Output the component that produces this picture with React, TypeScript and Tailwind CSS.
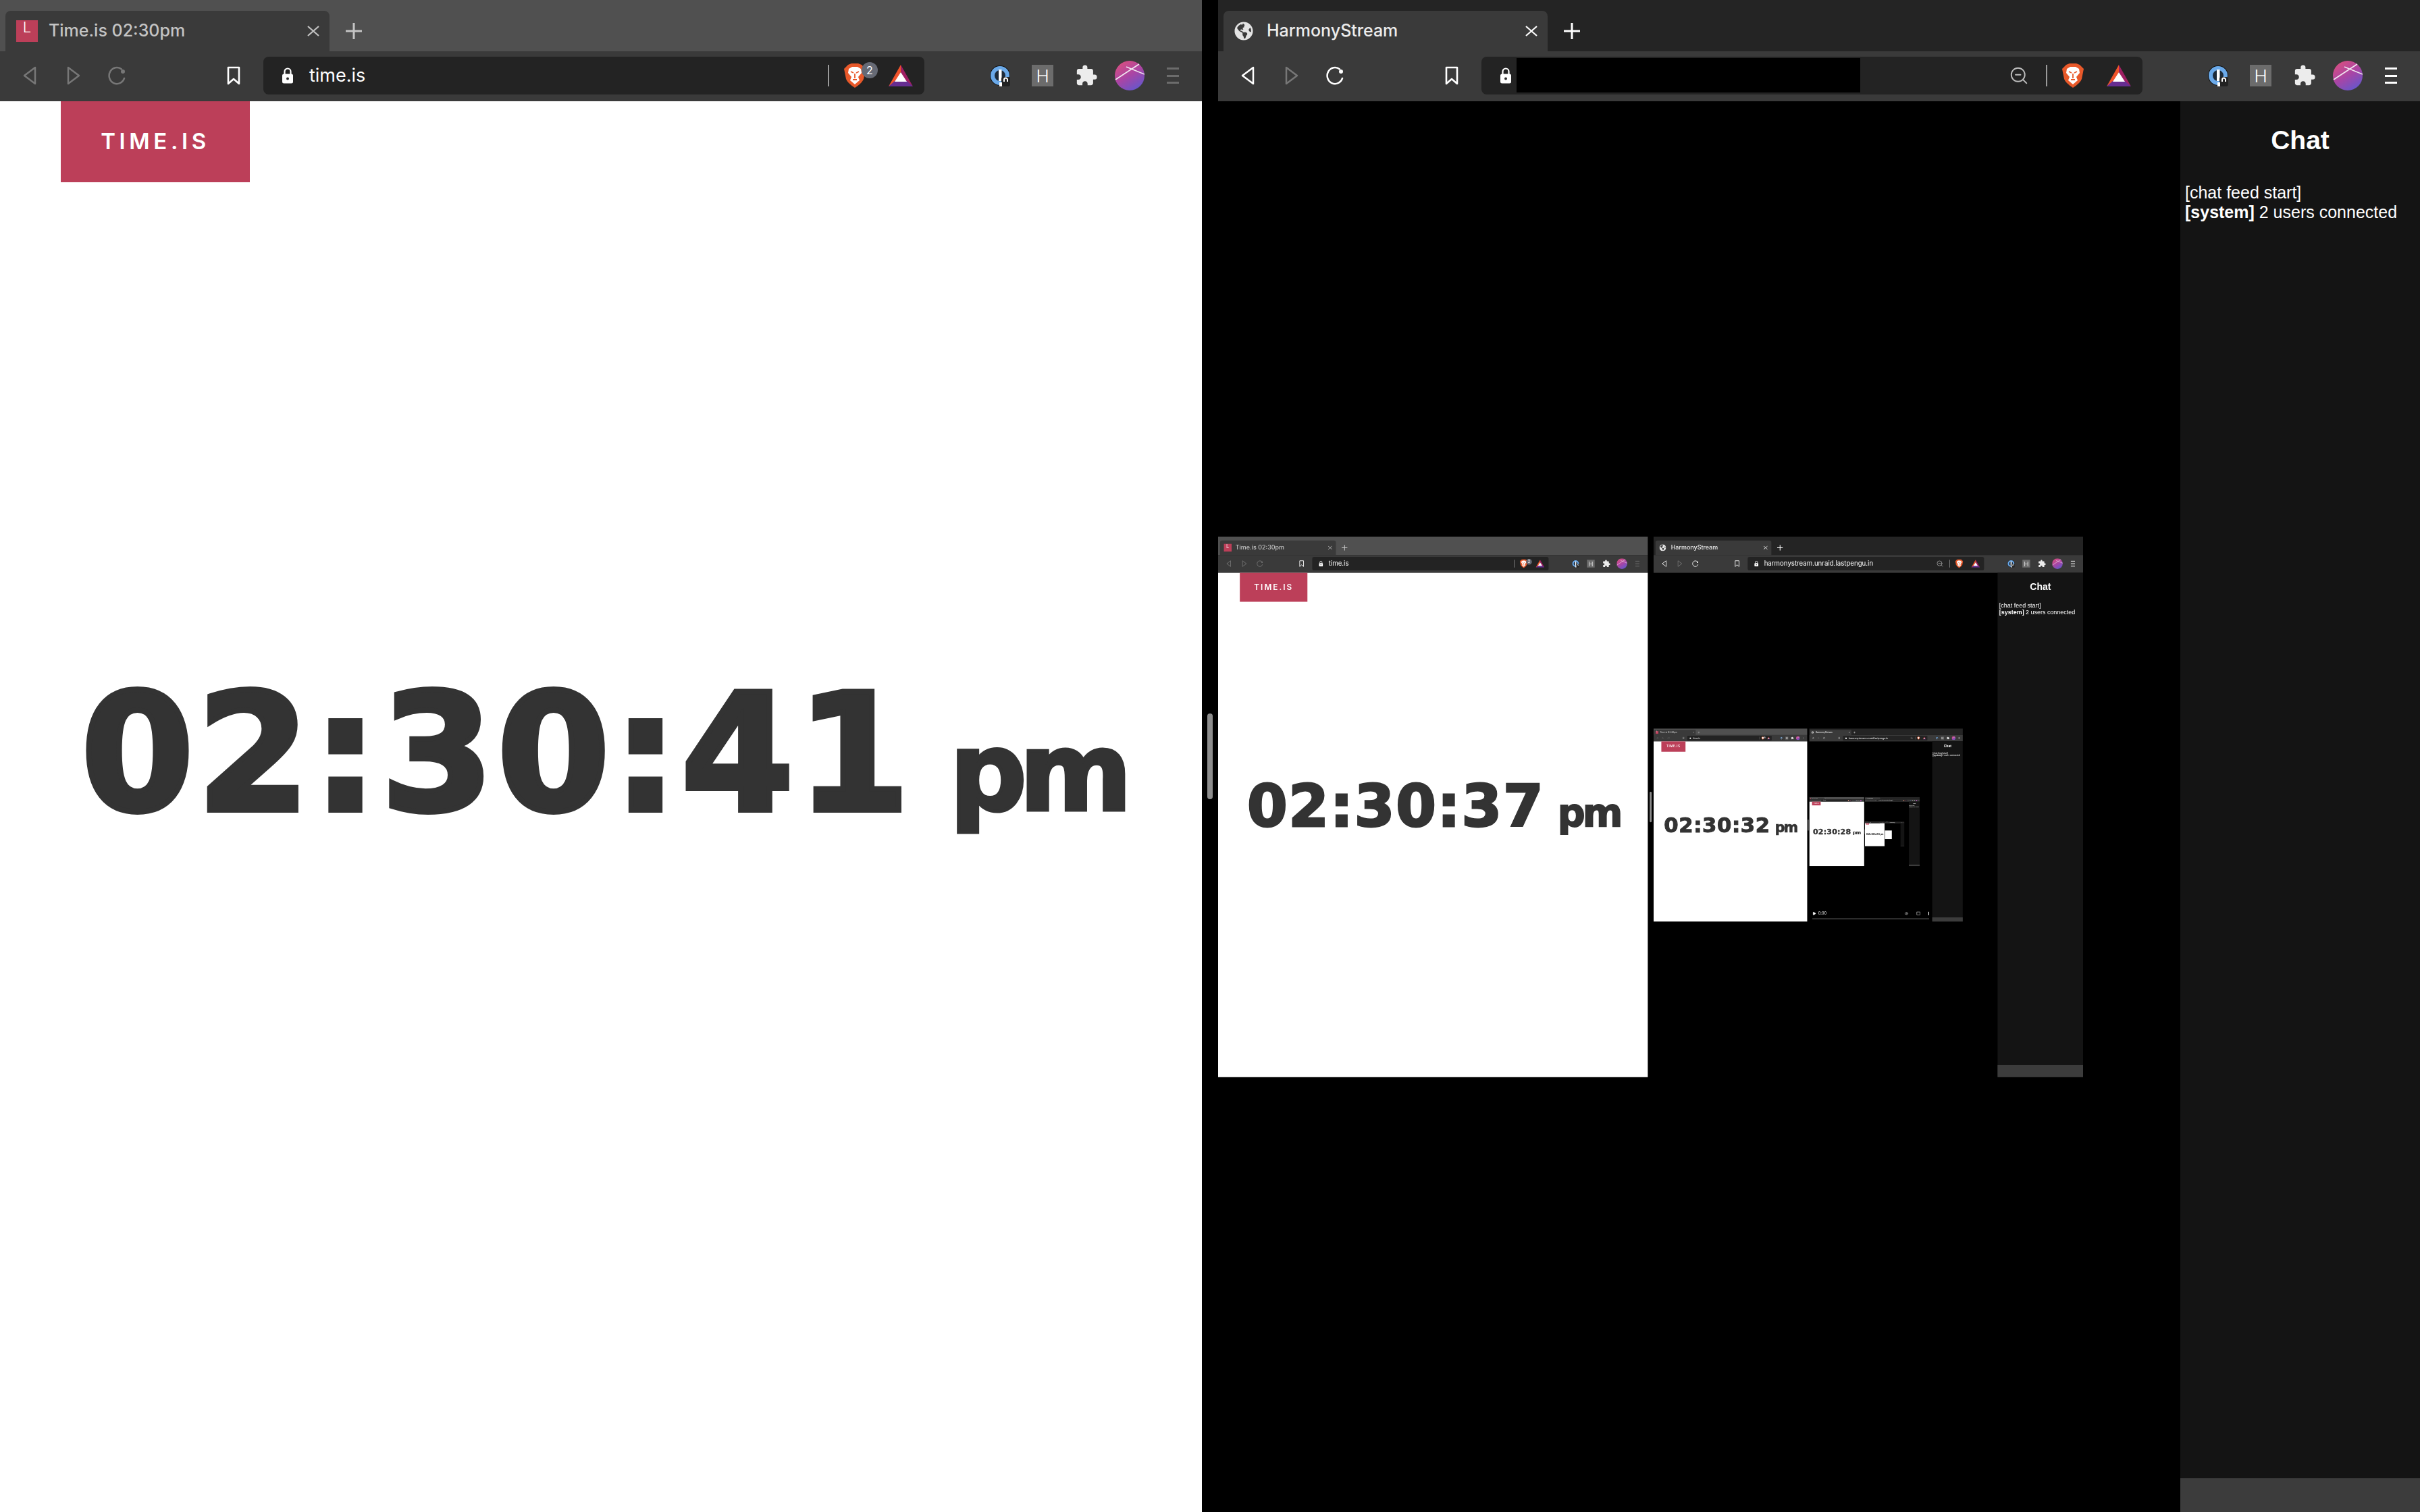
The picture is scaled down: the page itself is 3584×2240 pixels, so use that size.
import { FaGlobeAmericas } from 'react-icons/fa';
import { MdExtension } from 'react-icons/md';
import { Play, Volume2, ZoomOut } from 'lucide-react';

const clockTimes = ['02:30:41', '02:30:37', '02:30:32', '02:30:28', '02:30:23'];
const MAX_DEPTH = 5;

// softer picture the deeper we are in the capture loop
const thumbBlur = ['', 'blur-[0.7px]', 'blur-[1.5px]', 'blur-[4px]', 'blur-[10px]', 'blur-[20px]'];

function BackIcon({ color }: { color: string }) {
  return (
    <svg width="20" height="28" viewBox="0 0 20 28" fill="none" stroke={color} strokeWidth="2.5" strokeLinejoin="round">
      <path d="M18 2 L2 14 L18 26 Z" />
    </svg>
  );
}

function ForwardIcon({ color }: { color: string }) {
  return (
    <svg width="20" height="28" viewBox="0 0 20 28" fill="none" stroke={color} strokeWidth="2.5" strokeLinejoin="round">
      <path d="M2 2 L18 14 L2 26 Z" />
    </svg>
  );
}

function ReloadIcon({ color }: { color: string }) {
  return (
    <svg width="28" height="28" viewBox="0 0 28 28" fill="none" stroke={color} strokeWidth="2.5" strokeLinecap="round">
      <path d="M21 4.5 A 11.5 12 0 1 0 25 18" />
      <circle cx="23" cy="8" r="3" fill={color} stroke="none" />
    </svg>
  );
}

function BookmarkIcon() {
  return (
    <svg width="20" height="28" viewBox="0 0 20 28" fill="none" stroke="#fff" strokeWidth="2.6" strokeLinejoin="round">
      <path d="M2 2 H18 V26 L10 19 L2 26 Z" />
    </svg>
  );
}

function LockIcon() {
  return (
    <svg width="18" height="24" viewBox="0 0 18 24" fill="none">
      <path d="M4.5 10 V6 a4.5 4.5 0 0 1 9 0 V10" stroke="#fff" strokeWidth="2.2" />
      <rect x="1" y="9.5" width="16" height="14" rx="2.5" fill="#fff" />
      <circle cx="9" cy="16.5" r="2" fill="#2a2a2a" />
    </svg>
  );
}

function BraveIcon() {
  return (
    <svg width="34" height="36" viewBox="0 0 34 36">
      <path d="M7 2 L12 0 H22 L27 2 L33 8 L30 23 Q28 29 17 36 Q6 29 4 23 L1 8 Z" fill="#e8592a" />
      <path d="M8 8 L13 5 H21 L26 8 L27 14 L22 20 L24 25 L17 31 L10 25 L12 20 L7 14 Z" fill="#fff" />
      <path d="M11 12 L15 14 M23 12 L19 14 M17 15 V22 M14 24 H20" stroke="#e8592a" strokeWidth="1.8" fill="none" />
    </svg>
  );
}

function BatIcon() {
  return (
    <svg width="36" height="32" viewBox="0 0 36 32">
      <path d="M18 0 L36 32 L26 26 L18 11 Z" fill="#9e1f63" />
      <path d="M18 0 L0 32 L10 26 L18 11 Z" fill="#f0532b" />
      <path d="M0 32 H36 L27 24 H9 Z" fill="#662d91" />
      <path d="M18 11 L27 25 H9 Z" fill="#fff" />
    </svg>
  );
}

function OnePasswordIcon() {
  return (
    <svg width="30" height="32" viewBox="0 0 30 32">
      <circle cx="15" cy="16" r="15" fill="#111" />
      <circle cx="15" cy="16" r="11" fill="#1d2b3a" stroke="#6aa9e9" strokeWidth="6" />
      <rect x="13" y="7" width="4.5" height="17" fill="#fff" />
      <rect x="17" y="18" width="13" height="14" rx="3" fill="#222" />
      <path d="M21 25 v-3 a2.5 2.5 0 0 1 5 0 v3" stroke="#fff" strokeWidth="2" fill="none" />
      <rect x="14" y="26" width="4" height="6" fill="#fff" />
    </svg>
  );
}

function AvatarIcon({ id }: { id: string }) {
  return (
    <svg width="44" height="44" viewBox="0 0 44 44">
      <defs>
        <linearGradient id={id} x1="0.2" y1="0" x2="0.8" y2="1">
          <stop offset="0" stopColor="#d94f7f" />
          <stop offset="0.5" stopColor="#a945a5" />
          <stop offset="1" stopColor="#5f58cf" />
        </linearGradient>
      </defs>
      <circle cx="22" cy="22" r="22" fill={`url(#${id})`} />
      <path d="M1 28 L36 5 M17 9 L44 20" stroke="#f1e6f1" strokeWidth="1.6" />
    </svg>
  );
}

function MenuIcon({ color }: { color: string }) {
  return (
    <svg width="18" height="26" viewBox="0 0 18 26" fill={color}>
      <rect y="1" width="18" height="3" />
      <rect y="12" width="18" height="3" />
      <rect y="22" width="18" height="3" />
    </svg>
  );
}

type ChromeProps = {
  strip: string;
  inactive: boolean;
  title: string;
  url: string;
  hideUrl: boolean;
  favicon: React.ReactNode;
  uid: string;
};

function BrowserChrome({ strip, inactive, title, url, hideUrl, favicon, uid }: ChromeProps) {
  const navColor = inactive ? '#777' : '#fff';
  return (
    <div className="shrink-0">
      <div className={`flex h-[76px] items-end pl-2 ${strip}`}>
        <div className="flex h-[60px] w-[480px] items-center rounded-t-lg bg-[#3a3a3a] pl-4 pr-[14px]">
          <span className="flex w-[48px] shrink-0 items-center">{favicon}</span>
          <span className={`flex-1 truncate text-[25px] font-medium ${inactive ? 'text-[#c4c4c4]' : 'text-[#ececec]'}`}>{title}</span>
          <svg width="20" height="16" viewBox="0 0 20 16" stroke={inactive ? '#c4c4c4' : '#fff'} strokeWidth="2.2">
            <path d="M2 1 L18 15 M18 1 L2 15" />
          </svg>
        </div>
        <div className="mb-[18px] ml-6 h-6 w-6">
          <svg width="24" height="24" viewBox="0 0 24 24" stroke={inactive ? '#c4c4c4' : '#fff'} strokeWidth="3">
            <path d="M12 0 V24 M0 12 H24" />
          </svg>
        </div>
      </div>
      <div className="flex h-[74px] items-center bg-[#3a3a3a] pb-[2px] pl-[34px]">
        <BackIcon color={navColor} />
        <div className="ml-[45px]">
          <ForwardIcon color="#777" />
        </div>
        <div className="ml-[40px]">
          <ReloadIcon color={navColor} />
        </div>
        <div className="ml-[149px]">
          <BookmarkIcon />
        </div>
        <div className="relative ml-[34px] flex h-[56px] w-[979px] items-center rounded-lg bg-[#232323] pl-[27px] pr-[17px]">
          <LockIcon />
          <span className="ml-[23px] flex-1 text-[27px] font-normal text-white">{url}</span>
          {hideUrl && <div className="absolute left-[52px] top-[2px] h-[51px] w-[509px] bg-black" />}
          {!inactive && <ZoomOut className="mr-[25px] text-[#bdbdbd]" size={30} strokeWidth={1.5} />}
          <div className="h-8 w-[2px] bg-[#9a9a9a]" />
          <div className="relative ml-[21px] flex w-[34px] justify-center">
            <BraveIcon />
            {inactive && (
              <span className="absolute -right-[17px] -top-[2px] flex h-6 w-6 items-center justify-center rounded-full bg-[#666a75] text-[16px] text-white">2</span>
            )}
          </div>
          <div className="ml-[33px]">
            <BatIcon />
          </div>
        </div>
        <div className="ml-[97px]">
          <OnePasswordIcon />
        </div>
        <div className="ml-8 flex h-8 w-8 items-center justify-center bg-[#6c6c6c] text-[26px] font-light text-white">H</div>
        <MdExtension className="ml-[32px] text-[#ececec]" size={34} />
        <div className="ml-[25px]">
          <AvatarIcon id={`avatar-${uid}`} />
        </div>
        <div className="ml-[33px]">
          <MenuIcon color={inactive ? '#6c6c6c' : '#fff'} />
        </div>
      </div>
    </div>
  );
}

function TimePage({ depth }: { depth: number }) {
  return (
    <div className="flex min-h-0 flex-1 flex-col bg-white">
      <div className="ml-[90px] flex h-[120px] w-[280px] shrink-0 items-center justify-center bg-[#bc3f59] text-[33px] font-semibold tracking-[0.17em] text-white">
        TIME.IS
      </div>
      <div className="ml-[120px] mt-[727px] flex items-baseline font-['DejaVu_Sans',sans-serif] font-bold leading-none text-[#333]">
        <span className="text-[240px] tracking-[0.02em] [-webkit-text-stroke:8px_#333]">{clockTimes[depth]}</span>
        <span className="ml-[54px] text-[160px] tracking-[-0.07em] [-webkit-text-stroke:5px_#333]">pm</span>
      </div>
    </div>
  );
}

function VideoControls() {
  return (
    <div className="absolute bottom-[30px] left-[36px] right-[36px] text-white">
      <div className="flex items-center justify-between text-[44px]">
        <div className="flex items-center gap-6">
          <Play size={44} fill="#fff" />
          <span>0:00</span>
        </div>
        <div className="flex items-center gap-24">
          <Volume2 size={44} />
          <div className="h-10 w-10 border-4 border-white" />
          <div className="h-10 w-2 bg-white" />
        </div>
      </div>
      <div className="mt-6 h-2 bg-[#666]" />
    </div>
  );
}

function Thumb({ depth }: { depth: number }) {
  return (
    <div className={`h-[801px] w-[1281px] shrink-0 overflow-hidden ${thumbBlur[depth]}`}>
      <div className="h-[2240px] w-[3584px] origin-top-left scale-[0.3575]">
        {depth < MAX_DEPTH ? <Desktop depth={depth} /> : <div className="h-full w-[1780px] bg-white" />}
      </div>
    </div>
  );
}

function ChatPanel() {
  return (
    <aside className="flex w-[355px] shrink-0 flex-col bg-[#141414] font-['Liberation_Sans',sans-serif] text-white">
      <h1 className="mt-[35px] text-center text-[39px] font-bold leading-[46px]">Chat</h1>
      <div className="ml-[7px] mt-[40px] flex-1 whitespace-nowrap text-[25px] leading-[29px]">
        <p>[chat feed start]</p>
        <p>
          <b>[system]</b> 2 users connected
        </p>
      </div>
      <div className="h-[50px] bg-[#3c3c3c]" />
    </aside>
  );
}

function Desktop({ depth }: { depth: number }) {
  return (
    <div className="flex h-[2240px] w-[3584px] bg-black font-['Inter',sans-serif]">
      <section className="flex w-[1780px] shrink-0 flex-col">
        <BrowserChrome
          strip="bg-[#505050]"
          inactive
          title="Time.is 02:30pm"
          url="time.is"
          hideUrl={false}
          uid={`l${depth}`}
          favicon={
            <span className="flex h-8 w-8 justify-center bg-[#bc3f59] text-[22px] font-light leading-[20px] text-white">L</span>
          }
        />
        <TimePage depth={depth} />
      </section>
      <div className="flex w-6 shrink-0 items-center justify-center">
        <div className="h-[127px] w-2 rounded bg-[#8c8c8c]" />
      </div>
      <section className="flex min-w-0 flex-1 flex-col">
        <BrowserChrome
          strip="bg-[#242424]"
          inactive={false}
          title="HarmonyStream"
          url="harmonystream.unraid.lastpengu.in"
          hideUrl={depth === 0}
          uid={`r${depth}`}
          favicon={<FaGlobeAmericas className="text-[#e4e4e4]" size={28} />}
        />
        <div className="flex min-h-0 flex-1">
          <div className="relative flex min-w-0 flex-1 items-center">
            <Thumb depth={depth + 1} />
            {depth === 2 && <VideoControls />}
          </div>
          <ChatPanel />
        </div>
      </section>
    </div>
  );
}

export default function App() {
  return (
    <div className="h-[2240px] w-[3584px] overflow-hidden">
      <Desktop depth={0} />
    </div>
  );
}
